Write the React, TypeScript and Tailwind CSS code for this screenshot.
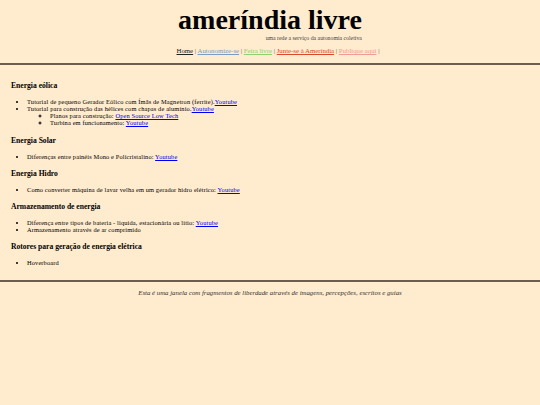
const sections = [
  {
    title: "Energia eólica",
    items: [
      {
        text: "Tutorial de pequeno Gerador Eólico com Ímãs de Magnetron (ferrite).",
        link: "Youtube",
      },
      {
        text: "Tutorial para construção das hélices com chapas de alumínio.",
        link: "Youtube",
        sub: [
          { text: "Planos para construção: ", link: "Open Source Low Tech" },
          { text: "Turbina em funcionamento: ", link: "Youtube" },
        ],
      },
    ],
  },
  {
    title: "Energia Solar",
    items: [{ text: "Diferenças entre painéis Mono e Policristalino: ", link: "Youtube" }],
  },
  {
    title: "Energia Hidro",
    items: [
      { text: "Como converter máquina de lavar velha em um gerador hidro elétrico: ", link: "Youtube" },
    ],
  },
  {
    title: "Armazenamento de energia",
    items: [
      { text: "Diferença entre tipos de bateria - liquida, estacionária ou lítio: ", link: "Youtube" },
      { text: "Armazenamento através de ar comprimido" },
    ],
  },
  {
    title: "Rotores para geração de energia elétrica",
    items: [{ text: "Hoverboard" }],
  },
];

type Item = { text: string; link?: string; sub?: Item[] };

const Row = ({ item }: { item: Item }) => (
  <li>
    {item.text}
    {item.link && (
      <a href="#" className="text-[#0000ee] underline">
        {item.link}
      </a>
    )}
    {item.sub && (
      <ul className="list-[circle] pl-[23px]">
        {item.sub.map((s, i) => (
          <Row key={i} item={s} />
        ))}
      </ul>
    )}
  </li>
);

export default function App() {
  return (
    <div
      className="min-h-[405px] bg-[#ffebcd] text-black"
      style={{ fontFamily: '"Liberation Serif", "Times New Roman", serif' }}
    >
      <header className="flex flex-col items-center pt-[5px]">
        <div className="flex flex-col items-end">
          <h1 className="text-[28px] font-bold leading-[30px]">ameríndia livre</h1>
          <p className="text-[5.8px] leading-[7px] text-[#444]">uma rede a serviço da autonomia coletiva</p>
        </div>
        <nav className="mt-[5px] pl-[16px] text-[6.8px] leading-[8px] text-[#555]">
          <a href="#" className="text-[#222] underline">Home</a> |{" "}
          <a href="#" className="text-[#7a9cc0] underline">Autonomize-se</a> |{" "}
          <a href="#" className="text-[#8fd070] underline">Feira livre</a> |{" "}
          <a href="#" className="text-[#d9492c] underline">Junte-se à Ameríndia</a> |{" "}
          <a href="#" className="text-[#f29a94] underline">Publique aqui</a> |
        </nav>
      </header>
      <hr className="mt-[8px] border-0 border-t-2 border-[#6b5e4e]" />

      <main className="px-[11px] pt-[16px]">
        {sections.map((s) => (
          <section key={s.title} className="mb-[9px] first:mb-[10px]">
            <h3 className="text-[7.6px] font-bold leading-[10px]">{s.title}</h3>
            <ul className="mt-[7px] list-disc pl-[16px] text-[6.4px] leading-[7px] tracking-[0.13px]">
              {s.items.map((it, i) => (
                <Row key={i} item={it} />
              ))}
            </ul>
          </section>
        ))}
      </main>

      <hr className="mt-[14px] border-0 border-t-2 border-[#6b5e4e]" />
      <footer className="pt-[6px] text-center text-[6.8px] italic text-[#333]">
        Esta é uma janela com fragmentos de liberdade através de imagens, percepções, escritos e guias
      </footer>
    </div>
  );
}
